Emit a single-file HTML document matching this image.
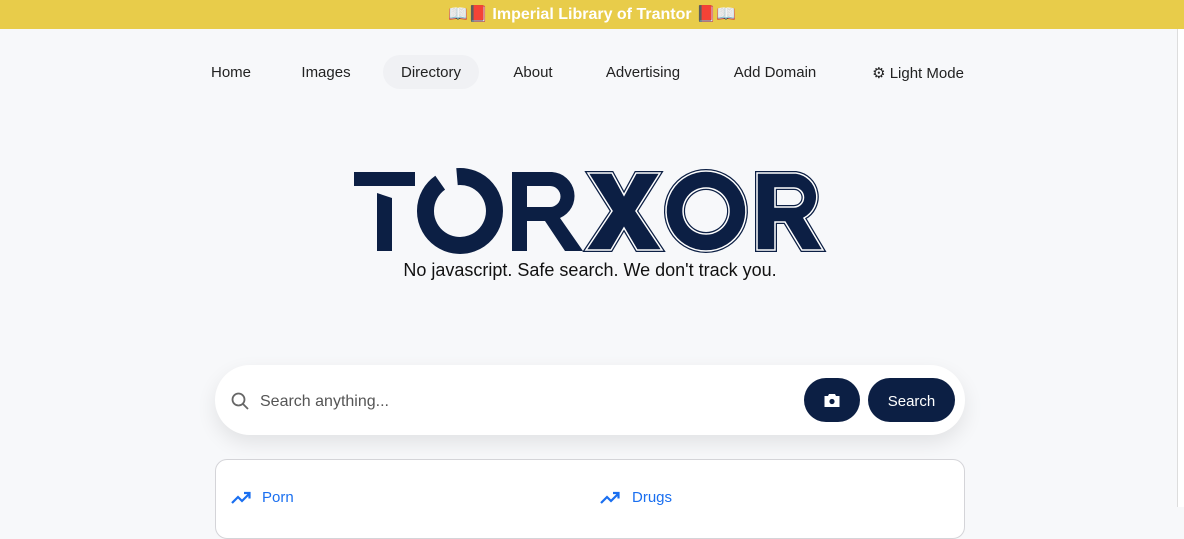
<!DOCTYPE html>
<html><head><meta charset="utf-8"><style>
*{margin:0;padding:0;box-sizing:border-box}
body{width:1184px;height:507px;overflow:hidden;background:#f7f8fa;font-family:"Liberation Sans",sans-serif;position:relative}
.top{height:29px;background:#e8cc4a;color:#fff;font-weight:bold;font-size:16px;text-align:center;line-height:29px}
.nav a{position:absolute;top:64px;font-size:15px;color:#222;text-decoration:none;transform:translateX(-50%);white-space:nowrap}
.pill{position:absolute;left:383px;top:55px;width:96px;height:34px;border-radius:17px;background:#f0f1f4}
.tag{position:absolute;left:0;width:1180px;top:260px;text-align:center;font-size:18px;color:#111}
.sb{position:absolute;left:215px;top:365px;width:750px;height:70px;border-radius:35px;background:#fff;box-shadow:0 8px 20px rgba(0,0,0,.09)}
.ph{position:absolute;left:260px;top:392px;font-size:16px;line-height:20px;color:#555}
.cam{position:absolute;left:804px;top:378px;width:56px;height:44px;border-radius:22px;background:#0c1f44}
.btn{position:absolute;left:868px;top:378px;width:87px;height:44px;border-radius:22px;background:#0c1f44;color:#fff;font-size:15px;text-align:center;line-height:47px}
.card{position:absolute;left:215px;top:459px;width:750px;height:80px;border:1px solid #d4d4d8;border-radius:12px;background:#fff}
.lk{position:absolute;top:489px;font-size:15px;line-height:18px;color:#1a6ff0}
.scr{position:absolute;right:0;top:29px;width:7px;height:478px;background:#fff;border-left:1px solid #ddd}
</style></head><body>
<div class="top">📖📕 Imperial Library of Trantor 📕📖</div>
<div class="pill"></div>
<div class="nav">
<a style="left:231px">Home</a><a style="left:326px">Images</a><a style="left:431px">Directory</a><a style="left:533px">About</a><a style="left:643px">Advertising</a><a style="left:775px">Add Domain</a><a style="left:918px">⚙ Light Mode</a>
</div>
<svg style="position:absolute;left:0;top:0" width="1184" height="300">
<g fill="#0c1f44">
<path d="M354 172H415V186H354Z"/>
<path d="M377 193L392 198V251H377Z"/>
<path d="M512 172H552A24 24 0 0 1 560 218L583 251H565L545 221H527V251H512ZM527 186V207H550A10.5 10.5 0 0 0 550 186Z"/>
</g>
<path d="M457 176.6A34.5 34.5 0 1 1 440.2 182.7" fill="none" stroke="#0c1f44" stroke-width="17"/>
<g fill="#0c1f44" stroke="#0c1f44" stroke-width="4" stroke-linejoin="miter">
<path d="M588 173H612L624 195L636 173H660L636 211L662 250H637L624 228L611 250H586L612 211Z"/>
<path fill-rule="evenodd" d="M706 171A40 40 0 1 1 705.9 171ZM706 188A23 23 0 1 0 706.1 188Z"/>
<path fill-rule="evenodd" d="M757 173H796A24 24 0 0 1 804 218L823 250H802L785 222H775V250H757ZM775 188V207H794A9.5 9.5 0 0 0 794 188Z"/>
</g>
<g fill="none" stroke="#fff" stroke-width="1.5">
<path d="M588 173H612L624 195L636 173H660L636 211L662 250H637L624 228L611 250H586L612 211Z"/>
<path d="M706 171A40 40 0 1 1 705.9 171ZM706 188A23 23 0 1 0 706.1 188Z"/>
<path d="M757 173H796A24 24 0 0 1 804 218L823 250H802L785 222H775V250H757ZM775 188V207H794A9.5 9.5 0 0 0 794 188Z"/>
</g>
</svg>
<div class="tag">No javascript. Safe search. We don't track you.</div>
<div class="sb"></div>
<svg style="position:absolute;left:230px;top:391px" width="20" height="20" viewBox="0 0 20 20" fill="none" stroke="#666" stroke-width="1.8"><circle cx="8.5" cy="8.5" r="6"/><path d="M13 13L18 18"/></svg>
<div class="ph">Search anything...</div>
<div class="cam"><svg style="position:absolute;left:19px;top:15px" width="18" height="15" viewBox="0 0 18 15"><path d="M6 1H12L13 3H16.5V14H1.5V3H5Z" fill="#fff"/><circle cx="9" cy="8.5" r="2.6" fill="#0c1f44"/></svg></div>
<div class="btn">Search</div>
<div class="card"></div>
<svg style="position:absolute;left:231px;top:491px" width="20" height="14" viewBox="0 0 20 14" fill="none" stroke="#1a6ff0" stroke-width="2.2"><path d="M1 12L7 6L11 10L18 3M13 2H18.5V7.5"/></svg>
<div class="lk" style="left:262px">Porn</div>
<svg style="position:absolute;left:600px;top:491px" width="20" height="14" viewBox="0 0 20 14" fill="none" stroke="#1a6ff0" stroke-width="2.2"><path d="M1 12L7 6L11 10L18 3M13 2H18.5V7.5"/></svg>
<div class="lk" style="left:632px">Drugs</div>
<div class="scr"></div>
</body></html>
